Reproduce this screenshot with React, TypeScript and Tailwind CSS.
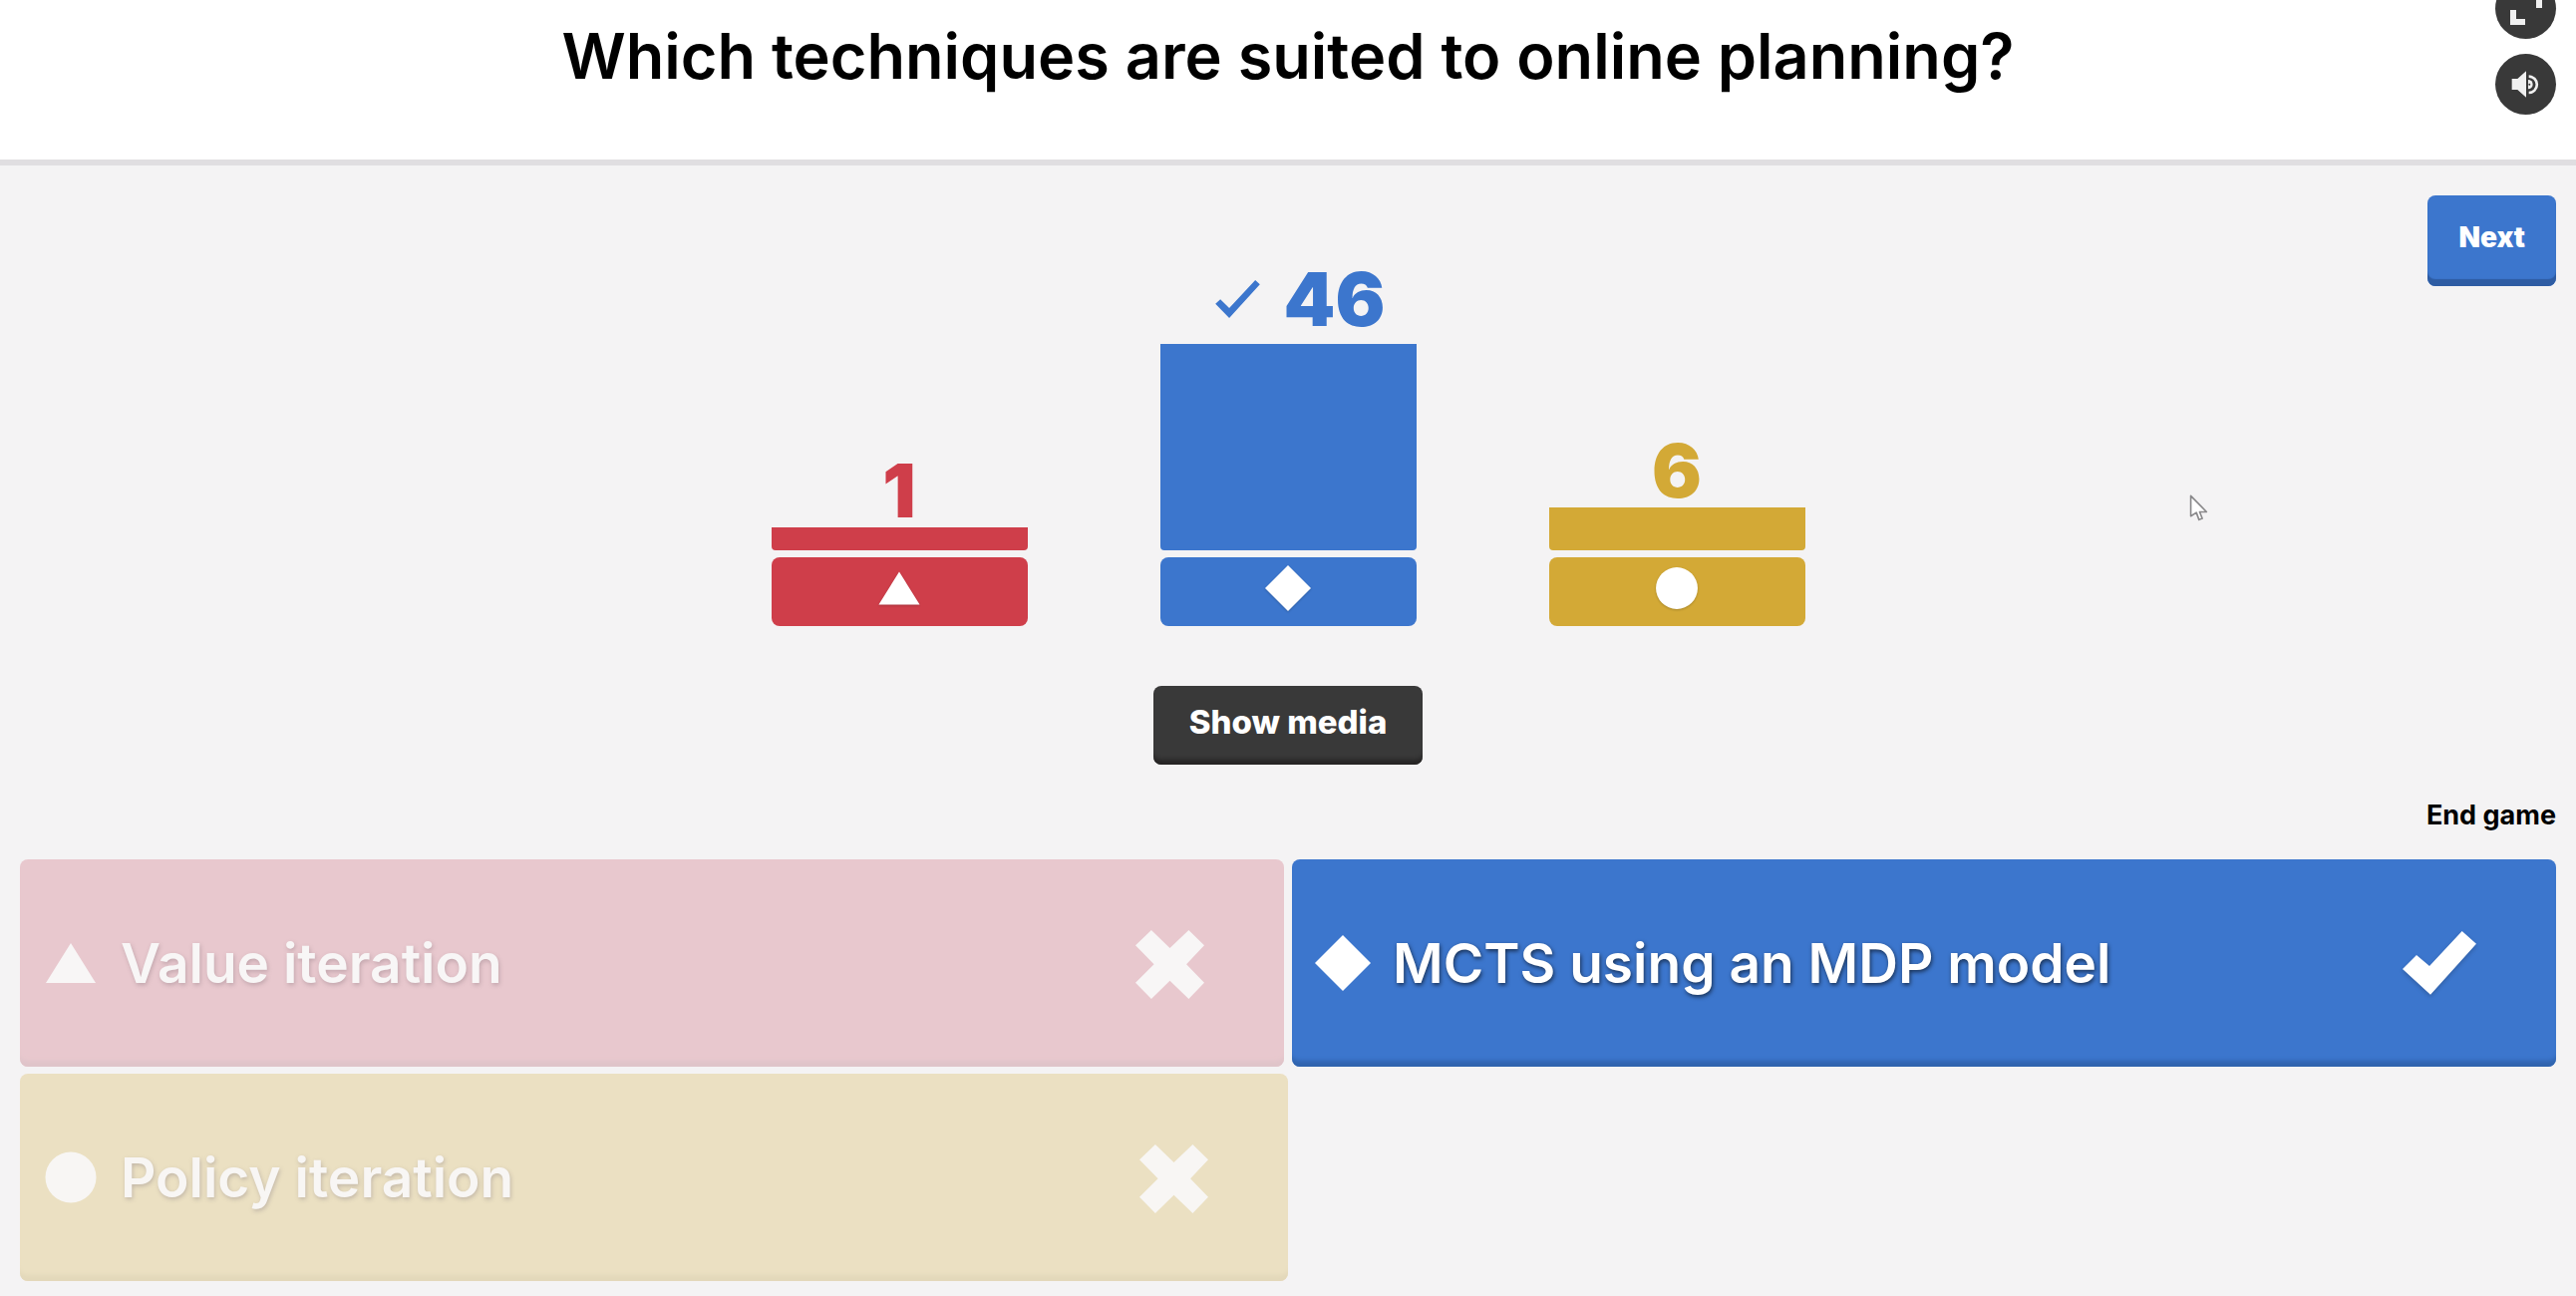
import React from "react";

type Shape = "triangle" | "diamond" | "circle";

type Answer = {
  text: string;
  shape: Shape;
  votes: number;
  correct: boolean;
};

const answers: Answer[] = [
  { text: "Value iteration", shape: "triangle", votes: 1, correct: false },
  { text: "MCTS using an MDP model", shape: "diamond", votes: 46, correct: true },
  { text: "Policy iteration", shape: "circle", votes: 6, correct: false },
];

const barHeights: Record<Shape, string> = {
  triangle: "h-[23px]",
  diamond: "h-[207px]",
  circle: "h-[43px]",
};

const solid: Record<Shape, string> = {
  triangle: "bg-[#cf3e4a]",
  diamond: "bg-[#3c76cd]",
  circle: "bg-[#d3a936]",
};

const ink: Record<Shape, string> = {
  triangle: "text-[#cf3e4a]",
  diamond: "text-[#3c76cd]",
  circle: "text-[#d3a936]",
};

const card: Record<Shape, string> = {
  triangle: "bg-[#e8c8ce] text-[#f8f6f6] shadow-[inset_0_-9px_4px_-3px_#dfc4c9]",
  diamond: "bg-[#3c76cd] text-white shadow-[inset_0_-9px_4px_-3px_#3064ae]",
  circle: "bg-[#ebe0c2] text-[#f8f6f4] shadow-[inset_0_-9px_4px_-3px_#e3d8ba]",
};

const textShadow: Record<Shape, string> = {
  triangle: "[text-shadow:1px_2px_4px_rgba(120,100,110,0.35)]",
  diamond: "[text-shadow:1px_2px_4px_rgba(0,0,0,0.6)]",
  circle: "[text-shadow:1px_2px_4px_rgba(120,110,120,0.35)]",
};

function ShapeIcon({ shape, className }: { shape: Shape; className: string }) {
  return (
    <svg viewBox="0 0 56 56" className={className} fill="currentColor" aria-hidden="true">
      {shape === "triangle" && <path d="M28 8 53 48H3z" />}
      {shape === "diamond" && <path d="M28 0 56 28 28 56 0 28z" />}
      {shape === "circle" && <circle cx="28" cy="28" r="25.5" />}
    </svg>
  );
}

function CrossIcon() {
  return (
    <svg viewBox="117 282 208 208" className="mt-[3px] size-[69px]" fill="currentColor" aria-hidden="true">
      <path d="M165 282 221 336 278 282 325 328 271 385 325 441 278 490 221 435 165 490 117 441 173 385 117 328z" />
    </svg>
  );
}

function TickIcon() {
  return (
    <svg
      viewBox="752 462 222 192"
      className="h-16 w-[74px] overflow-visible drop-shadow-[0_2px_2px_rgba(0,0,0,0.2)]"
      fill="currentColor"
      aria-hidden="true"
    >
      <path d="M752 576 794 534 833 567 931 462 974 500 836 653z" />
    </svg>
  );
}

function ThinTickIcon() {
  return (
    <svg viewBox="263 90 135 115" className="h-[38px] w-[45px]" fill="currentColor" aria-hidden="true">
      <path d="M263 162 278 148 305 175 384 90 398 103 305 205z" />
    </svg>
  );
}

function FullscreenIcon() {
  return (
    <svg viewBox="0 0 32 32" className="size-8" fill="currentColor" aria-hidden="true">
      <path d="M0 17h6v9h9v6H0zM32 15h-6V6h-9V0h15z" />
    </svg>
  );
}

function SpeakerIcon() {
  return (
    <svg viewBox="402 210 90 90" className="size-[30px]" aria-hidden="true">
      <path d="M404 237h17l26-23v79l-26-23h-17z" fill="currentColor" />
      <path d="M455 230a24 24 0 0 1 0 49" fill="none" stroke="currentColor" strokeWidth="8" />
      <path d="M453 240a13 13 0 0 1 0 28z" fill="currentColor" />
      <circle cx="457" cy="254" r="3" fill="#393939" />
    </svg>
  );
}

function RoundButton({ label, children }: { label: string; children: React.ReactNode }) {
  return (
    <button
      type="button"
      aria-label={label}
      className="flex size-[61px] items-center justify-center rounded-full bg-[#393939] text-[#f0f0f0]"
    >
      {children}
    </button>
  );
}

function VoteColumn({ answer }: { answer: Answer }) {
  const { shape, votes, correct } = answer;
  return (
    <div className="w-[257px]">
      <div
        className={`flex items-center justify-center gap-6 text-[74px] leading-[74px] font-black ${ink[shape]} ${correct ? "pb-2 pl-6" : ""}`}
      >
        {correct && <ThinTickIcon />}
        <span>{votes}</span>
      </div>
      <div className={`rounded-b-[4px] ${solid[shape]} ${barHeights[shape]}`} />
      <div
        className={`mt-[7px] flex h-[69px] items-center justify-center rounded-lg pb-2 text-white ${solid[shape]}`}
      >
        <ShapeIcon shape={shape} className="size-[46px] drop-shadow-[0_1px_1px_rgba(0,0,0,0.2)]" />
      </div>
    </div>
  );
}

function AnswerCard({ answer }: { answer: Answer }) {
  const { shape, text, correct } = answer;
  return (
    <button
      type="button"
      className={`flex h-[208px] w-full items-center rounded-lg pr-20 pl-[23px] text-left ${card[shape]}`}
    >
      <ShapeIcon shape={shape} className="size-14 shrink-0" />
      <span
        className={`ml-[22px] flex-1 text-[55px] leading-[64px] font-semibold ${textShadow[shape]}`}
      >
        {text}
      </span>
      {correct ? <TickIcon /> : <CrossIcon />}
    </button>
  );
}

export default function App() {
  return (
    <div className="relative min-h-screen bg-[#f4f3f4] font-['Inter',sans-serif] text-black">
      <header className="relative overflow-hidden border-b-[6px] border-[#e0dee1] bg-white pt-5 pb-[68px]">
        <h1 className="text-center text-[63px] leading-[72px] font-semibold">
          Which techniques are suited to online planning?
        </h1>
        <div className="absolute -top-[22px] right-5 flex flex-col gap-[15px]">
          <RoundButton label="Fullscreen">
            <FullscreenIcon />
          </RoundButton>
          <RoundButton label="Sound">
            <SpeakerIcon />
          </RoundButton>
        </div>
      </header>

      <main className="px-5">
        <section className="grid grid-cols-[1fr_auto_1fr] pt-[30px] pb-7">
          <div />
          <div className="flex flex-col items-center pt-[67px] pb-[67px]">
            <div className="flex items-end gap-[133px]">
              {answers.map((a) => (
                <VoteColumn key={a.shape} answer={a} />
              ))}
            </div>
            <button
              type="button"
              className="mt-[60px] h-[79px] rounded-lg bg-[#393939] px-9 pb-2 text-[33px] leading-[40px] font-extrabold text-white shadow-[inset_0_-8px_4px_-3px_#262424]"
            >
              Show media
            </button>
          </div>
          <div className="flex flex-col items-end justify-between">
            <button
              type="button"
              className="h-[91px] rounded-lg bg-[#3c76cd] px-[31px] pb-2 text-[28px] leading-[32px] font-black text-white shadow-[inset_0_-7px_1px_#2e5ca3]"
            >
              Next
            </button>
            <a href="#end" className="text-[27px] leading-[32px] font-bold">
              End game
            </a>
          </div>
        </section>

        <section className="flex flex-col gap-[7px] pb-[15px]">
          <div className="grid grid-cols-2 gap-2">
            <AnswerCard answer={answers[0]} />
            <AnswerCard answer={answers[1]} />
          </div>
          <div className="w-1/2">
            <AnswerCard answer={answers[2]} />
          </div>
        </section>
      </main>

      <svg
        viewBox="46 48 56 82"
        className="pointer-events-none absolute top-[496px] left-[85%] h-[27px] w-[19px]"
        aria-hidden="true"
      >
        <path
          d="M50 52v62l17-11 8 22 10-4-8-20h21z"
          fill="#fff"
          stroke="#8a898b"
          strokeWidth="5"
          strokeLinejoin="round"
        />
      </svg>
    </div>
  );
}
